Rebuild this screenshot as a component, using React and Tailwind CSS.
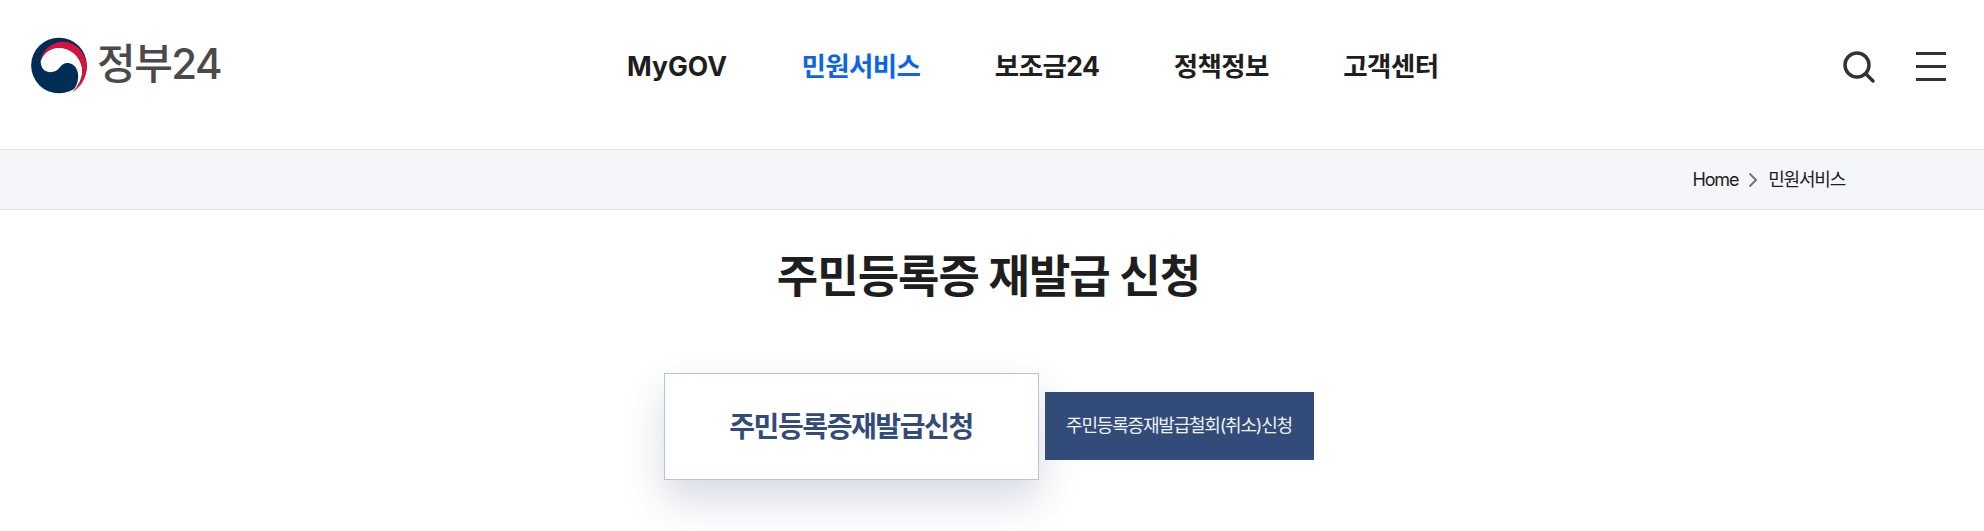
const krFont = "font-['Inter','Noto_Sans_CJK_KR','Noto_Sans',sans-serif]";

function Logo() {
  return (
    <svg width="85" height="74" viewBox="0 0 240 210" className="shrink-0">
      <circle cx="110" cy="112" r="79" fill="#002d56" />
      <path
        d="M58,100 C65,78 85,62 110,62 C145,62 172,90 176,122 C178,148 165,170 147,189 C170,160 170,125 150,110 C135,100 120,105 112,118 C104,130 85,135 72,128 C62,122 58,110 58,100Z"
        fill="#ffffff"
      />
      <path
        d="M58,100 C62,65 95,42 128,45 C165,50 190,85 189,118 C188,150 170,175 147,189 C165,170 178,148 176,122 C172,90 145,62 110,62 C85,62 65,78 58,100Z"
        fill="#d6123f"
      />
    </svg>
  );
}

function SearchIcon() {
  return (
    <svg width="34" height="34" viewBox="0 0 34 34" fill="none" stroke="#333333" strokeWidth="3.5" strokeLinecap="round">
      <circle cx="15" cy="15" r="12" />
      <path d="M24 24 L31 31" />
    </svg>
  );
}

export default function App() {
  const menus = ["MyGOV", "민원서비스", "보조금24", "정책정보", "고객센터"];

  return (
    <div className={`bg-white min-h-[531px] overflow-hidden ${krFont}`}>
      {/* Header */}
      <header className="h-[149px] flex items-center pl-[20px] pr-[38px]">
        <div className="w-[607px] shrink-0 flex items-center -mt-[24px]">
          <Logo />
          <span className="-ml-[8px] mt-[2px] text-[42px] font-medium tracking-[-1.5px] leading-none text-[#4a4a4a]">
            정부24
          </span>
        </div>

        <nav className="flex gap-[74.5px] -mt-[16px]">
          {menus.map((menu) => (
            <a
              key={menu}
              className={`text-[26.5px] font-bold ${
                menu === "MyGOV" ? "tracking-[0px]" : "tracking-[-0.6px]"
              } ${menu === "민원서비스" ? "text-[#0b66e4]" : "text-[#1e1e1e]"}`}
            >
              {menu}
            </a>
          ))}
        </nav>

        <div className="ml-auto flex items-center gap-[40px] -mt-[16px]">
          <SearchIcon />
          <div className="flex flex-col gap-[10px] w-[30px]">
            <span className="h-[3px] bg-[#333333]" />
            <span className="h-[3px] bg-[#333333]" />
            <span className="h-[3px] bg-[#333333]" />
          </div>
        </div>
      </header>

      {/* Breadcrumb */}
      <div className="h-[61px] bg-[#f4f6fa] border-y border-[#e2e4e9] flex items-center justify-end pr-[139px] text-[18px] tracking-[-1.2px] text-[#1e1e1e]">
        <span>Home</span>
        <svg width="10" height="16" viewBox="0 0 10 16" fill="none" stroke="#77737a" strokeWidth="2" className="mx-[10px]">
          <path d="M1.5 1.5 L8 8 L1.5 14.5" />
        </svg>
        <span>민원서비스</span>
      </div>

      {/* Content */}
      <main className="pr-[7px]">
        <h1 className="mt-[37px] text-center text-[45px] leading-[60px] font-bold tracking-[-1px] text-[#1e1e1e]">
          주민등록증 재발급 신청
        </h1>

        <div className="mt-[66px] flex items-center justify-center gap-[6px]">
          <button className="w-[375px] h-[107px] bg-white border border-[#b4c3e0] shadow-[0_20px_40px_rgba(50,70,120,0.2)] text-[28px] font-bold tracking-[-1.4px] text-[#334b78]">
            주민등록증재발급신청
          </button>
          <button className="w-[269px] h-[68px] mb-[2px] bg-[#334b78] text-[18px] tracking-[-1.2px] text-[#eef1f6]">
            주민등록증재발급철회(취소)신청
          </button>
        </div>
      </main>
    </div>
  );
}
